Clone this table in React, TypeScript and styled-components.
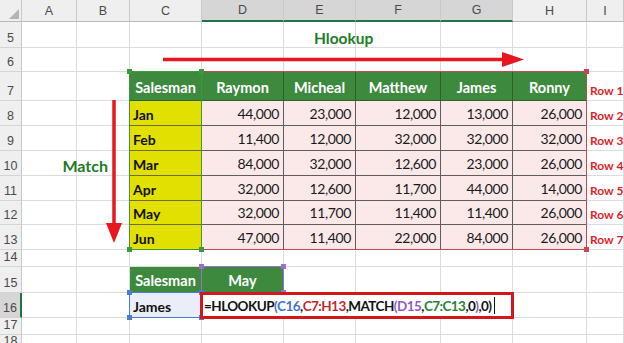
import React from 'react'
import styled, { createGlobalStyle, css } from 'styled-components'

const GlobalStyle = createGlobalStyle`
  html, body {
    margin: 0;
    padding: 0;
    background: #ffffff;
    overflow: hidden;
  }
  body {
    font-family: Lato, "Open Sans", "Liberation Sans", sans-serif;
  }
`

type Place = { $r: number; $c: number; $rs?: number; $cs?: number }

const place = css<Place>`
  grid-row: ${(p) => p.$r} / span ${(p) => p.$rs ?? 1};
  grid-column: ${(p) => p.$c} / span ${(p) => p.$cs ?? 1};
`

// column index in the grid: 1 = row headers, 2 = A ... 10 = I
const col = (letter: string) => letter.charCodeAt(0) - 63
// grid row for an excel row number: 1 = column headers, row 5 = 2 ...
const row = (n: number) => n - 3

const COLS = ['A', 'B', 'C', 'D', 'E', 'F', 'G', 'H', 'I']
const ROWS = [5, 6, 7, 8, 9, 10, 11, 12, 13, 14, 15, 16, 17, 18]
const SELECTED_COLS = ['D', 'E', 'F', 'G']

const SALES: Array<[string, number[]]> = [
  ['Jan', [44000, 23000, 12000, 13000, 26000]],
  ['Feb', [11400, 12000, 32000, 32000, 32000]],
  ['Mar', [84000, 32000, 12600, 23000, 26000]],
  ['Apr', [32000, 12600, 11700, 44000, 14000]],
  ['May', [32000, 11700, 11400, 11400, 26000]],
  ['Jun', [47000, 11400, 22000, 84000, 26000]],
]
const NAMES = ['Raymon', 'Micheal', 'Matthew', 'James', 'Ronny']

const FORMULA: Array<[string, string]> = [
  ['=HLOOKUP', '#111'],
  ['(', '#3f72c9'],
  ['C16', '#3f72c9'],
  [',', '#111'],
  ['C7:H13', '#c3282f'],
  [',MATCH', '#111'],
  ['(', '#8d5cc4'],
  ['D15', '#8d5cc4'],
  [',', '#111'],
  ['C7:C13', '#23843a'],
  [',0', '#111'],
  [')', '#8d5cc4'],
  [',0)', '#111'],
]

const Sheet = styled.div`
  position: relative;
  display: grid;
  grid-template-columns: 22px 55px 53px 72px 82px 72px 85px 72px 74px 1fr;
  grid-template-rows: 22px 26px 24px 29px 25px 25px 25px 25px 24px 25px 17px 26px 25px 17px 1fr;
  width: 624px;
  height: 343px;
  overflow: hidden;
  background: #ffffff;
`

const GridCell = styled.div<Place>`
  ${place}
  box-sizing: border-box;
  border-right: 1px solid #dcdcdc;
  border-bottom: 1px solid #dcdcdc;
`

const Corner = styled.div<Place>`
  ${place}
  position: relative;
  box-sizing: border-box;
  background: #efefef;
  border-right: 1px solid #c9c9c9;
  border-bottom: 1px solid #b9b9b9;

  svg {
    position: absolute;
    right: 2px;
    bottom: 2px;
  }
`

const ColHead = styled.div<Place & { $selected?: boolean }>`
  ${place}
  box-sizing: border-box;
  display: flex;
  align-items: center;
  justify-content: center;
  font-family: "Liberation Sans", Arial, sans-serif;
  font-size: 12.5px;
  color: #4a4a4a;
  background: ${(p) => (p.$selected ? '#d6d6d6' : '#efefef')};
  border-right: 1px solid #c9c9c9;
  border-bottom: ${(p) => (p.$selected ? '2px solid #217346' : '1px solid #b9b9b9')};
`

const RowHead = styled.div<Place & { $selected?: boolean }>`
  ${place}
  box-sizing: border-box;
  display: flex;
  align-items: flex-end;
  justify-content: center;
  padding-bottom: 3px;
  font-family: "Liberation Sans", Arial, sans-serif;
  font-size: 12.5px;
  line-height: 1;
  color: #4a4a4a;
  background: ${(p) => (p.$selected ? '#d6d6d6' : '#efefef')};
  border-right: ${(p) => (p.$selected ? '2px solid #217346' : '1px solid #c9c9c9')};
  border-bottom: 1px solid #d4d4d4;
`

const Caption = styled.div<Place & { $size: number; $align: 'start' | 'end'; $pad: number }>`
  ${place}
  display: flex;
  align-items: flex-end;
  justify-content: ${(p) => (p.$align === 'start' ? 'flex-start' : 'flex-end')};
  padding: 0 ${(p) => (p.$align === 'end' ? p.$pad : 0)}px 2px
    ${(p) => (p.$align === 'start' ? p.$pad : 0)}px;
  font-size: ${(p) => p.$size}px;
  font-weight: 700;
  line-height: 1;
  color: #1d7d27;
`

const HeadCell = styled.div<Place>`
  ${place}
  box-sizing: border-box;
  display: flex;
  align-items: center;
  justify-content: center;
  padding-top: 2px;
  background: #3d8a3f;
  border-right: 1px solid #2b5f2c;
  border-bottom: 1px solid #2b5f2c;
  color: #ffffff;
  font-size: 14.5px;
  font-weight: 700;
`

const NameCell = styled.div<Place & { $fill?: string }>`
  ${place}
  box-sizing: border-box;
  display: flex;
  align-items: flex-end;
  padding: 0 0 3px 3px;
  background: ${(p) => p.$fill ?? '#e1e000'};
  border-right: 1px solid #6d6d2a;
  border-bottom: 1px solid #6d6d2a;
  color: #111;
  font-size: 14px;
  font-weight: 700;
  line-height: 1;
`

const NumCell = styled.div<Place>`
  ${place}
  box-sizing: border-box;
  display: flex;
  align-items: flex-end;
  justify-content: flex-end;
  padding: 0 4px 4px 0;
  background: #fbe9ea;
  border-right: 1px solid #5e5e5e;
  border-bottom: 1px solid #5e5e5e;
  color: #1a1a1a;
  font-size: 14px;
  letter-spacing: -0.4px;
  line-height: 1;
`

const RowLabel = styled.div<Place>`
  ${place}
  display: flex;
  align-items: flex-end;
  padding: 0 0 4px 3px;
  color: #e01f28;
  font-size: 12px;
  font-weight: 700;
  line-height: 1;
  white-space: nowrap;
`

const RangeBox = styled.div<Place & { $color: string }>`
  ${place}
  position: relative;
  margin: -1px 0 0 -1px;
  border: 1px solid ${(p) => p.$color};
  pointer-events: none;
`

const Handle = styled.span<{ $color: string; $v: 'top' | 'bottom'; $h: 'left' | 'right' }>`
  position: absolute;
  ${(p) => p.$v}: -3px;
  ${(p) => p.$h}: -3px;
  width: 5px;
  height: 5px;
  background: ${(p) => p.$color};
`

const FormulaBox = styled.div<Place>`
  ${place}
  display: flex;
  align-items: center;
  margin: -1px -1px -1px -2px;
  padding-left: 1px;
  border: 3px solid #d3171f;
  background: #ffffff;
  font-size: 13.5px;
  font-weight: 700;
  letter-spacing: -0.55px;
  white-space: nowrap;
  z-index: 2;
`

const Token = styled.span<{ $color: string }>`
  color: ${(p) => p.$color};
`

const Caret = styled.span`
  display: inline-block;
  width: 1px;
  height: 17px;
  margin-left: 2px;
  background: #111;
`

const ArrowArea = styled.div<Place>`
  ${place}
  position: relative;
  pointer-events: none;
  z-index: 3;

  svg {
    position: absolute;
    left: 0;
    top: 0;
    overflow: visible;
  }
`

type Corners = Array<['top' | 'bottom', 'left' | 'right']>
type BoxProps = Place & { color: string; corners?: Corners }

const ALL_CORNERS: Corners = [
  ['top', 'left'],
  ['top', 'right'],
  ['bottom', 'left'],
  ['bottom', 'right'],
]

const Reference = ({ color, corners = ALL_CORNERS, ...pos }: BoxProps) => (
  <RangeBox {...pos} $color={color}>
    {corners.map(([v, h]) => (
      <Handle key={v + h} $color={color} $v={v} $h={h} />
    ))}
  </RangeBox>
)

const fmt = (n: number) => n.toLocaleString('en-US')

export default function App() {
  return (
    <>
      <GlobalStyle />
      <Sheet>
        {ROWS.map((r) =>
          COLS.map((c) => <GridCell key={`${c}${r}`} $r={row(r)} $c={col(c)} />)
        )}

        <Corner $r={1} $c={1}>
          <svg width="10" height="10" viewBox="0 0 10 10">
            <path d="M10 0 L10 10 L0 10 Z" fill="#b4b4b4" />
          </svg>
        </Corner>
        {COLS.map((c) => (
          <ColHead key={c} $r={1} $c={col(c)} $selected={SELECTED_COLS.includes(c)}>
            {c}
          </ColHead>
        ))}
        {ROWS.map((r) => (
          <RowHead key={r} $r={row(r)} $c={1} $selected={r === 16}>
            {r}
          </RowHead>
        ))}

        <Caption $r={row(5)} $c={col('E')} $cs={2} $size={15.5} $align="start" $pad={30}>
          Hlookup
        </Caption>
        <Caption $r={row(10)} $c={col('A')} $cs={2} $size={16} $align="end" $pad={22}>
          Match
        </Caption>

        <HeadCell $r={row(7)} $c={col('C')}>Salesman</HeadCell>
        {NAMES.map((name, i) => (
          <HeadCell key={name} $r={row(7)} $c={col('D') + i}>
            {name}
          </HeadCell>
        ))}
        {SALES.map(([month, values], i) => (
          <React.Fragment key={month}>
            <NameCell $r={row(8 + i)} $c={col('C')}>{month}</NameCell>
            {values.map((v, j) => (
              <NumCell key={j} $r={row(8 + i)} $c={col('D') + j}>
                {fmt(v)}
              </NumCell>
            ))}
          </React.Fragment>
        ))}
        {[7, 8, 9, 10, 11, 12, 13].map((r, i) => (
          <RowLabel key={r} $r={row(r)} $c={col('I')}>
            Row {i + 1}
          </RowLabel>
        ))}

        <HeadCell $r={row(15)} $c={col('C')}>Salesman</HeadCell>
        <HeadCell $r={row(15)} $c={col('D')}>May</HeadCell>
        <NameCell $r={row(16)} $c={col('C')} $fill="#e9eef8">James</NameCell>

        <Reference
          color="#c9474f"
          $r={row(7)}
          $rs={7}
          $c={col('C')}
          $cs={6}
          corners={[
            ['top', 'right'],
            ['bottom', 'right'],
          ]}
        />
        <Reference color="#3a9a3c" $r={row(7)} $rs={7} $c={col('C')} />
        <Reference color="#9a6fd2" $r={row(15)} $c={col('D')} />
        <Reference color="#4a7bd0" $r={row(16)} $c={col('C')} />

        <FormulaBox $r={row(16)} $c={col('D')} $cs={4}>
          {FORMULA.map(([text, color], i) => (
            <Token key={i} $color={color}>
              {text}
            </Token>
          ))}
          <Caret />
        </FormulaBox>

        <ArrowArea $r={row(6)} $c={col('C')} $cs={6}>
          <svg width="457" height="24" viewBox="0 0 457 24">
            <path d="M33 11.5 L375 11.5" stroke="#e8161e" strokeWidth="3.5" />
            <path d="M372 4 L394 11.5 L372 19 Z" fill="#e8161e" />
          </svg>
        </ArrowArea>
        <ArrowArea $r={row(7)} $rs={7} $c={col('B')}>
          <svg width="53" height="178" viewBox="0 0 53 178">
            <path d="M37 28 L37 153" stroke="#e8161e" strokeWidth="3.5" />
            <path d="M29 151 L45 151 L37 171 Z" fill="#e8161e" />
          </svg>
        </ArrowArea>
      </Sheet>
    </>
  )
}
